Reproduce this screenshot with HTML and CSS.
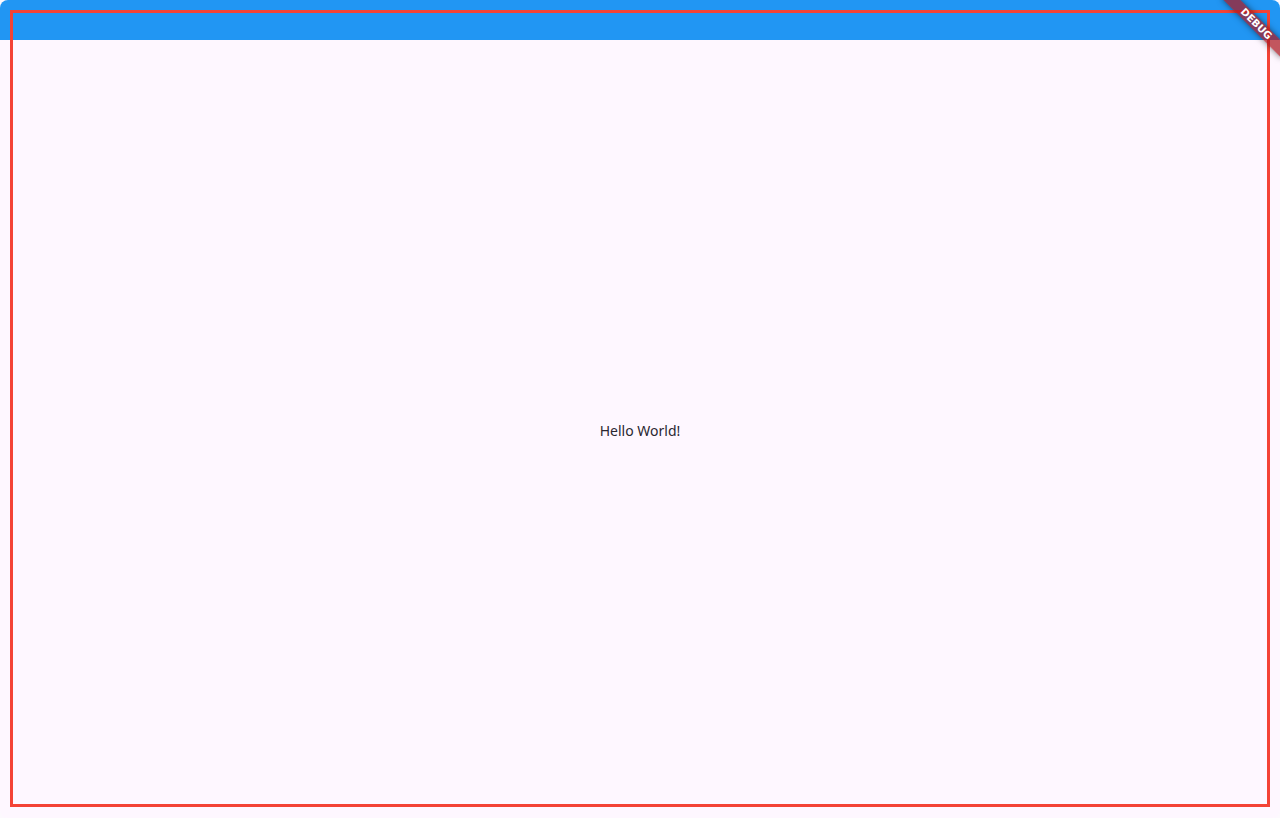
FILE: index.html
```html
<!DOCTYPE html>
<html lang="en">
<head>
  <meta charset="UTF-8" />
  <title>Hello World</title>
  <link rel="stylesheet" href="styles.css">
</head>
<body>

  <div class="window">
    <div class="app-bar"></div>
    <div class="content">
      <div class="greeting">Hello World!</div>
    </div>

    <div class="debug-outline"></div>
    <div class="debug-banner">DEBUG</div>
  </div>

</body>
</html>
```

FILE: styles.css
```css
html, body {
  margin: 0;
  padding: 0;
  height: 100%;
  background-color: #fdf9fe;
}
body {
  font-family: "Noto Sans", "Open Sans", sans-serif;
  overflow: hidden;
}
.window {
  position: relative;
  height: 818px;
  display: flex;
  flex-direction: column;
  background-color: #fef7ff;
  border-radius: 8px;
  overflow: hidden;
}
.app-bar {
  height: 40px;
  flex-shrink: 0;
  background-color: #2196f3;
}
.content {
  flex: 1;
  display: flex;
  align-items: center;
  justify-content: center;
}
.greeting {
  font-size: 14px;
  color: #2a2730;
  margin-top: 2px;
}
.debug-outline {
  position: absolute;
  top: 10px;
  left: 10px;
  right: 10px;
  bottom: 11px;
  border: 3px solid #f44336;
  pointer-events: none;
}
.debug-banner {
  position: absolute;
  top: 18px;
  left: 1214px;
  width: 84px;
  height: 12px;
  line-height: 12px;
  transform: rotate(45deg);
  background-color: rgba(170, 24, 32, 0.72);
  box-shadow: 0 0 6px rgba(0, 0, 0, 0.5);
  color: #fff;
  font-family: "DejaVu Sans", sans-serif;
  font-size: 10px;
  font-weight: bold;
  text-align: center;
}
```
